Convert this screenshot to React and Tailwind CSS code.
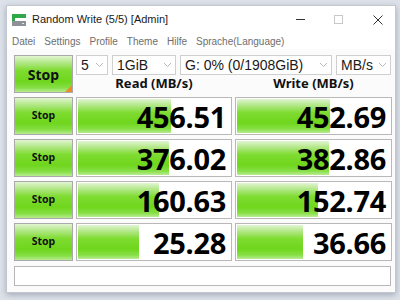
import React from "react";

const FONT = { fontFamily: '"Noto Sans", "Open Sans", "Liberation Sans", sans-serif' };
const UI = { fontFamily: '"Liberation Sans", Arial, sans-serif' };

const GREEN =
  "bg-[linear-gradient(to_bottom,#e2f5d2_0%,#b4e88a_18%,#7fdc32_40%,#6fd61c_70%,#86df45_88%,#b8ec92_100%)]";

const rows = [
  { read: "456.51", readPct: 61, write: "452.69", writePct: 61 },
  { read: "376.02", readPct: 60, write: "382.86", writePct: 60 },
  { read: "160.63", readPct: 53, write: "152.74", writePct: 53 },
  { read: "25.28", readPct: 40, write: "36.66", writePct: 43 },
];

function Select({ width, label }) {
  return (
    <div
      className={`${width} h-[20px] bg-white border border-[#cfcfcf] flex items-center justify-between pl-[4px] pr-[3px]`}
    >
      <span className="text-[14px] text-[#1a1a1a] leading-none whitespace-nowrap" style={UI}>
        {label}
      </span>
      <svg width="9" height="6" viewBox="0 0 9 6" className="shrink-0">
        <path d="M1 1l3.5 3.5L8 1" fill="none" stroke="#b8b8b8" strokeWidth="1" />
      </svg>
    </div>
  );
}

function StopButton({ big = false }) {
  return (
    <div
      className={`relative w-[59px] h-[38px] border border-[#a9a9a9] ${GREEN} flex items-center justify-center`}
    >
      <span className={`font-bold text-[#111] ${big ? "text-[14px]" : "text-[10.5px]"}`}>Stop</span>
      {big && (
        <div className="absolute right-0 bottom-0 w-0 h-0 border-l-[7px] border-l-transparent border-b-[7px] border-b-[#f08a24]" />
      )}
    </div>
  );
}

function ValueBox({ value, pct, width }) {
  return (
    <div className={`relative ${width} h-[38px] bg-white border border-[#b8b8b8] p-[1px]`}>
      <div className={`h-full ${GREEN}`} style={{ width: `${pct}%` }} />
      <div className="absolute inset-0 flex items-center justify-end pr-[5px]">
        <span className="text-[29px] font-bold text-black leading-none tracking-[-0.3px]">{value}</span>
      </div>
    </div>
  );
}

export default function App() {
  return (
    <div className="w-[400px] h-[300px] bg-[#dde2ea] pl-[6px] pt-[5px] overflow-hidden" style={FONT}>
      <div className="w-[390px] h-[288px] bg-[#fbfbfb] border border-[#c3c8d0] shadow-[0_2px_6px_rgba(60,70,90,0.35)] flex flex-col">
        {/* title bar */}
        <div className="h-[27px] bg-white flex items-center pl-[5px] shrink-0">
          <svg width="14" height="12" viewBox="0 0 14 12" className="mt-[1px]">
            <rect x="0" y="0" width="14" height="4" fill="#2fa84a" />
            <rect x="0" y="4" width="3" height="3" fill="#2fa84a" />
            <rect x="0" y="7" width="14" height="5" fill="#8d9299" />
            <rect x="10" y="9" width="2" height="1" fill="#e8e8e8" />
          </svg>
          <span className="ml-[6px] text-[11px] text-[#1a1a1a]" style={UI}>
            Random Write (5/5) [Admin]
          </span>
          <div className="ml-auto flex items-center h-full">
            <div className="w-[38px] flex justify-center">
              <div className="w-[9px] h-[1px] bg-[#333]" />
            </div>
            <div className="w-[38px] flex justify-center">
              <div className="w-[9px] h-[9px] border border-[#c8c8c8]" />
            </div>
            <div className="w-[38px] flex justify-center pl-[4px]">
              <svg width="10" height="10" viewBox="0 0 10 10">
                <path d="M0.5 0.5l9 9M9.5 0.5l-9 9" stroke="#333" strokeWidth="1" />
              </svg>
            </div>
          </div>
        </div>
        {/* menu */}
        <div
          className="h-[16px] flex items-center gap-[9px] pl-[5px] text-[10px] text-[#6e6e6e] bg-white shrink-0"
          style={UI}
        >
          <span>Datei</span>
          <span>Settings</span>
          <span>Profile</span>
          <span>Theme</span>
          <span>Hilfe</span>
          <span>Sprache(Language)</span>
        </div>
        {/* content */}
        <div className="pl-[7px] pt-[6px] flex flex-col gap-[4px]">
          <div className="flex gap-[3px]">
            <StopButton big />
            <div className="flex flex-col">
              <div className="flex gap-[4px]">
                <Select width="w-[32px]" label="5" />
                <Select width="w-[64px]" label="1GiB" />
                <Select width="w-[152px]" label="G: 0% (0/1908GiB)" />
                <Select width="w-[55px]" label="MB/s" />
              </div>
              <div className="flex h-[18px] items-center">
                <div className="w-[156px] text-center font-bold text-[13px] text-[#111]">Read (MB/s)</div>
                <div className="w-[160px] text-center font-bold text-[13px] text-[#111] pl-[3px]">
                  Write (MB/s)
                </div>
              </div>
            </div>
          </div>
          {rows.map((r, i) => (
            <div key={i} className="flex gap-[3px]">
              <StopButton />
              <ValueBox value={r.read} pct={r.readPct} width="w-[156px]" />
              <ValueBox value={r.write} pct={r.writePct} width="w-[157px]" />
            </div>
          ))}
          <div className="w-[377px] h-[20px] bg-white border border-[#b8b8b8] mt-[1px]" />
        </div>
      </div>
    </div>
  );
}
